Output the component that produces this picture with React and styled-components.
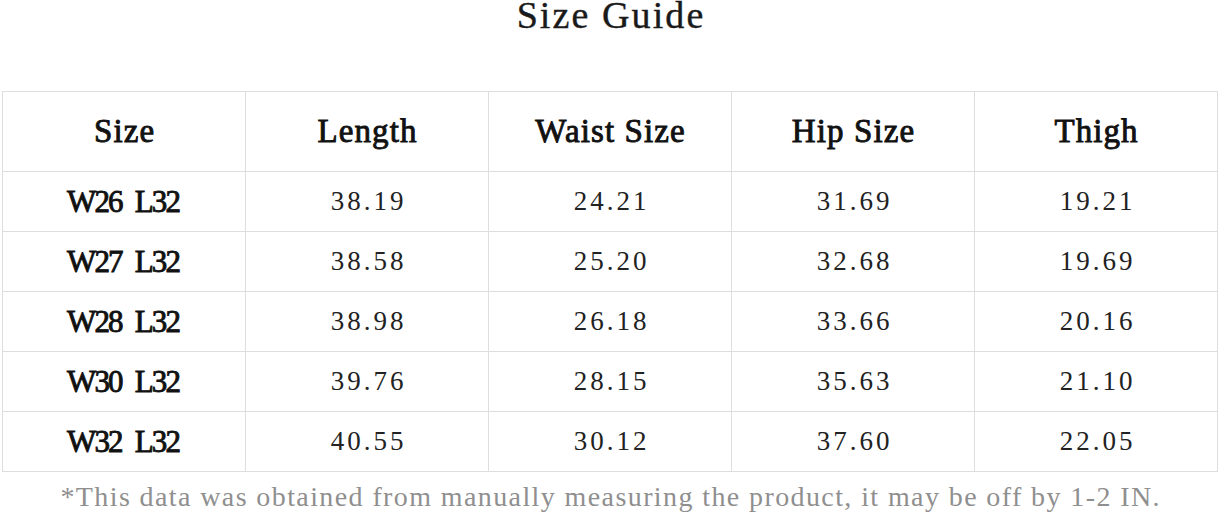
import React from 'react'
import styled, { createGlobalStyle } from 'styled-components'

const GlobalStyle = createGlobalStyle`
  html, body {
    margin: 0;
    padding: 0;
    background: #fff;
  }
  body {
    font-family: "Liberation Serif", "DejaVu Serif", serif;
    color: #1a1a1a;
  }
`;

const Page = styled.div`
  width: 1220px;
  height: 513px;
  overflow: hidden;
  display: flex;
  flex-direction: column;
  align-items: center;
`;

// spaced-out serif text, trailing spacing cancelled so it stays centred
const Spaced = styled.span`
  white-space: nowrap;
  letter-spacing: ${props => props.ls}px;
  word-spacing: ${props => props.ws || 0}px;
  margin-right: ${props => -props.ls}px;
`;

const Title = styled.h1`
  margin: 0;
  height: 30px;
  line-height: 30px;
  font-size: 38px;
  font-weight: normal;
  text-align: center;
  color: #1a1a1a;
  -webkit-text-stroke: 0.4px #1a1a1a;
`;

const Table = styled.div`
  margin-top: 61px;
  margin-left: 2px;
  align-self: flex-start;
  display: grid;
  grid-template-columns: repeat(5, 243px);
  border-top: 1px solid #dedede;
  border-left: 1px solid #dedede;
`;

const Cell = styled.div`
  box-sizing: border-box;
  height: ${props => (props.$head ? 80 : 60)}px;
  display: flex;
  align-items: center;
  justify-content: center;
  border-right: 1px solid #dedede;
  border-bottom: 1px solid #dedede;
  font-size: ${props => (props.$head ? 33 : props.$bold ? 31 : 27)}px;
  font-weight: normal;
  color: ${props => (props.$head || props.$bold ? '#111' : '#222')};
  -webkit-text-stroke: ${props => (props.$head || props.$bold ? '0.9px #111' : '0')};
  line-height: 1;
`;

const Note = styled.p`
  margin: 11px 0 0;
  font-size: 28px;
  line-height: 28px;
  color: #8f8f8f;
  text-align: center;
`;

const headers = ['Size', 'Length', 'Waist Size', 'Hip Size', 'Thigh'];

const rows = [
  ['W26 L32', '38.19', '24.21', '31.69', '19.21'],
  ['W27 L32', '38.58', '25.20', '32.68', '19.69'],
  ['W28 L32', '38.98', '26.18', '33.66', '20.16'],
  ['W30 L32', '39.76', '28.15', '35.63', '21.10'],
  ['W32 L32', '40.55', '30.12', '37.60', '22.05'],
];

export default function App() {
  return (
    <Page>
      <GlobalStyle />
      <Title>
        <Spaced ls={2.1}>Size Guide</Spaced>
      </Title>
      <Table>
        {headers.map(h => (
          <Cell $head key={h}>
            <Spaced ls={1.1}>{h}</Spaced>
          </Cell>
        ))}
        {rows.map(r =>
          r.map((v, i) => (
            <Cell key={r[0] + i} $bold={i === 0}>
              {i === 0 ? (
                <Spaced ls={-1.8} ws={7}>{v}</Spaced>
              ) : (
                <Spaced ls={3}>{v}</Spaced>
              )}
            </Cell>
          ))
        )}
      </Table>
      <Note>
        <Spaced ls={1.4}>
          *This data was obtained from manually measuring the product, it may be off by 1-2 IN.
        </Spaced>
      </Note>
    </Page>
  )
}
